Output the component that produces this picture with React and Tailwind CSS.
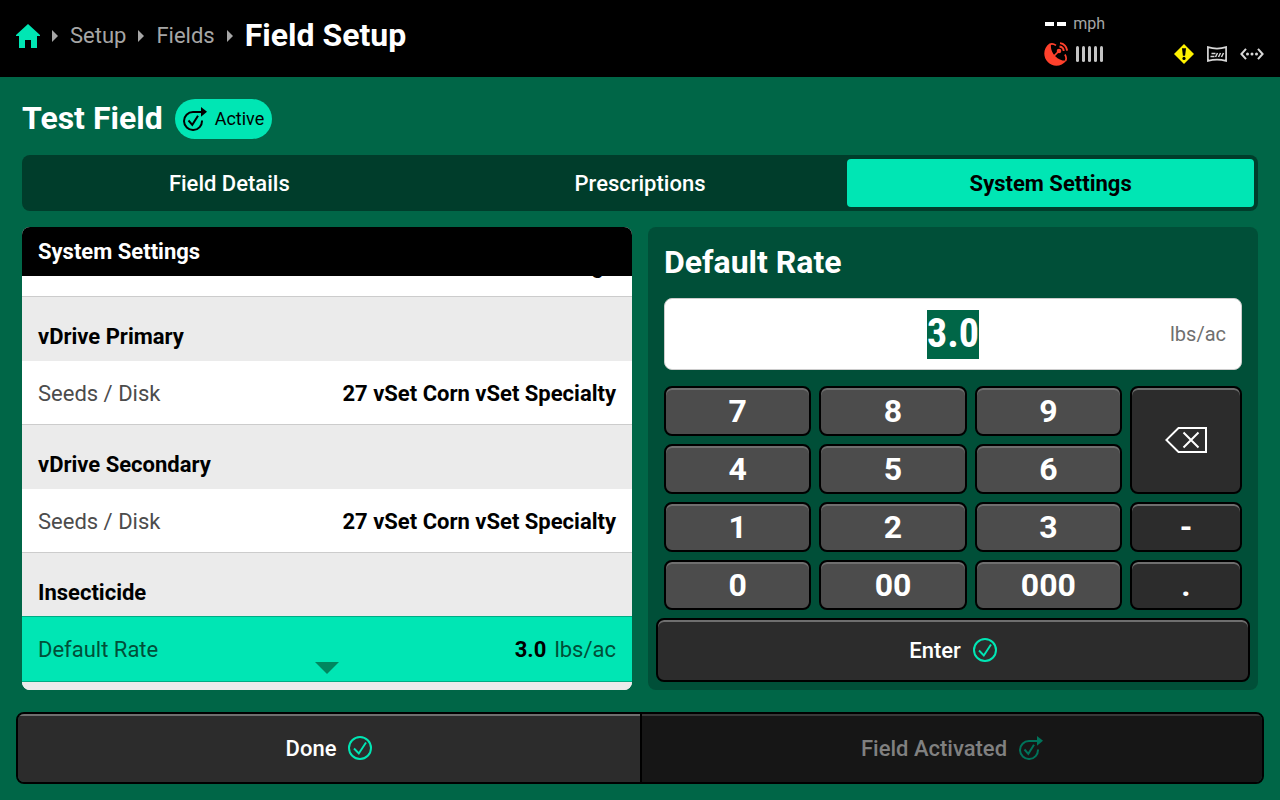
import { useEffect, useRef, useState } from 'react'
import clsx from 'clsx'

const keys = ['7', '8', '9', 'back', '4', '5', '6', '1', '2', '3', '-', '0', '00', '000', '.']

const tabs = ['Field Details', 'Prescriptions', 'System Settings']

const sections = [
  { title: 'Control', rows: [{ label: 'Mode', value: 'Average' }] },
  { title: 'vDrive Primary', rows: [{ label: 'Seeds / Disk', value: '27 vSet Corn vSet Specialty' }] },
  { title: 'vDrive Secondary', rows: [{ label: 'Seeds / Disk', value: '27 vSet Corn vSet Specialty' }] },
  { title: 'Insecticide', rows: [{ label: 'Default Rate', value: '3.0', unit: 'lbs/ac', selected: true }] },
  { title: 'Liquid', rows: [{ label: 'Default Rate', value: '5.0', unit: 'gal/ac' }] },
]

function HomeIcon() {
  return (
    <svg viewBox="0 0 24 24" className="w-6 h-6" fill="#00e6b4">
      <path d="M12 0 24 11v1h-3v12h-6v-8H9v8H3V12H0v-1z" />
    </svg>
  )
}

function Crumb({ children }) {
  return (
    <>
      <svg viewBox="0 0 6 12" className="w-[6px] h-3" fill="#a6a6a6">
        <path d="M0 0l6 6-6 6z" />
      </svg>
      {children}
    </>
  )
}

function DishIcon() {
  return (
    <svg viewBox="0 0 24 24" className="w-6 h-6" fill="none" stroke="#ff412c">
      <path
        d="M5.500 1.500C-.8 6-1.500 15 4 20.300c5 5 13.500 4.600 18.500-1.800-3.500 .6-8-1-11.200-4.300C8 10.800 6.500 6.500 7 3.500z"
        fill="#ff412c"
        stroke="none"
      />
      <path d="M5.500 2.600c1.500-1 4.200-.9 6.500.8M21.500 18.800c.9-1.600.7-4.200-.6-6.300" strokeWidth="1.700" />
      <path d="M9.500 14.500l5-5" strokeWidth="1.700" />
      <circle cx="15" cy="9" r="2.300" fill="#ff412c" stroke="none" />
      <path d="M15.500 4.500a4.800 4.800 0 0 1 4.200 4.500M16 1.100a8 8 0 0 1 7.100 7.500" strokeWidth="1.900" />
    </svg>
  )
}

function SignalBars() {
  return (
    <div className="flex gap-[3px]">
      {[0, 1, 2, 3, 4].map((i) => (
        <span key={i} className="w-[3px] h-4 rounded-sm bg-[#c4c4c4]" />
      ))}
    </div>
  )
}

function WarningIcon() {
  return (
    <svg viewBox="0 0 20 20" className="w-5 h-5">
      <path d="M10 0l10 10-10 10L0 10z" fill="#fff200" />
      <path d="M8 4.200h4l-.9 7.600H8.900z" fill="#000" />
      <circle cx="10" cy="14.400" r="1.600" fill="#000" />
    </svg>
  )
}

function MonitorIcon() {
  return (
    <svg viewBox="0 0 20 16" className="w-5 h-4" fill="none" stroke="#d8d8d8">
      <path d="M.9 1.100Q10 4 19.100 1.100v13.800Q10 12.500.9 14.900z" strokeWidth="1.700" />
      <path d="M4.500 7.500h4M3.500 10.500h4M8.500 11l2-4M11.500 11l2-4M14.500 11l2-4" strokeWidth="1.500" />
    </svg>
  )
}

function NetworkIcon() {
  return (
    <svg viewBox="0 0 24 12" className="w-6 h-3" fill="none" stroke="#d8d8d8" strokeWidth="2">
      <path d="M6 .8L1.400 6 6 11.200M18 .8L22.600 6 18 11.200" />
      <g fill="#d8d8d8" stroke="none">
        <circle cx="7.500" cy="6" r="1.500" />
        <circle cx="12" cy="6" r="1.500" />
        <circle cx="16.500" cy="6" r="1.500" />
      </g>
    </svg>
  )
}

function CheckIcon() {
  return (
    <svg viewBox="0 0 24 24" className="w-6 h-6" fill="none" stroke="#00e6b4">
      <circle cx="12" cy="12" r="11" strokeWidth="2" />
      <path d="M6 12.500l4.800 5L18 6.500" strokeWidth="1.900" />
    </svg>
  )
}

function ActivatedIcon() {
  return (
    <svg viewBox="0 0 24 24" className="w-6 h-6" fill="none" stroke="currentColor">
      <path d="M18 5H10a9 9 0 1 0 9 8.500" strokeWidth="2" />
      <path d="M18 0l6 4.800-6 5z" fill="currentColor" stroke="none" />
      <path d="M5.500 13.500l3.800 4.300 5.700-9" strokeWidth="2" />
    </svg>
  )
}

function BackspaceIcon() {
  return (
    <svg viewBox="0 0 42 26" className="w-[42px] h-[26px]" fill="none" stroke="#fff" strokeWidth="2">
      <path d="M13.500 1H41v24H13.500L1.300 13z" />
      <path d="M18.500 5.500l15 15M33.500 5.500l-15 15" />
    </svg>
  )
}

function Header() {
  return (
    <header className="flex justify-between h-[77px] shrink-0 bg-black px-4">
      <nav className="flex items-center gap-3 h-[72px] text-[22px] text-[#a6a6a6]">
        <a href="#home" aria-label="Home"><HomeIcon /></a>
        <Crumb><a href="#setup" className="pb-0.5">Setup</a></Crumb>
        <Crumb><a href="#fields" className="pb-0.5">Fields</a></Crumb>
        <Crumb><h1 className="pb-0.5 text-[32px] font-bold text-white">Field Setup</h1></Crumb>
      </nav>
      <div className="flex gap-[69px]">
        <div className="flex flex-col pt-3">
          <div className="flex items-center gap-[7px] h-6 pl-px">
            <span className="flex gap-[3px]">
              <span className="w-[9px] h-1 bg-white" />
              <span className="w-[9px] h-1 bg-white" />
            </span>
            <span className="text-base text-[#a6a6a6]">mph</span>
          </div>
          <div className="flex items-center gap-2 pt-[6px]">
            <DishIcon />
            <SignalBars />
          </div>
        </div>
        <div className="flex items-center gap-[13px] pt-[31px]">
          <WarningIcon />
          <MonitorIcon />
          <NetworkIcon />
        </div>
      </div>
    </header>
  )
}

function SettingRow({ label, value, unit, selected }) {
  return (
    <button
      type="button"
      className={clsx(
        'flex items-center justify-between w-full px-4 text-[22px]',
        selected
          ? 'relative h-[66px] -mt-px bg-[#00e6b4] border-y border-[#00ac84] text-[#004f38]'
          : 'h-16 pt-0.5 bg-white border-b border-[#cccccc] text-[#4c4c4c]'
      )}
    >
      <span>{label}</span>
      <span className="flex gap-2">
        <span className="font-bold text-black">{value}</span>
        {unit && <span>{unit}</span>}
      </span>
    </button>
  )
}

function SettingsList() {
  const listRef = useRef(null)

  useEffect(() => {
    listRef.current.scrollTop = 107
  }, [])

  return (
    <section className="relative flex flex-col min-w-0 min-h-0 rounded-lg overflow-hidden bg-white">
      <h3 className="shrink-0 h-[49px] leading-[49px] px-4 bg-black text-[22px] font-bold text-white">
        System Settings
      </h3>
      <div ref={listRef} className="flex-1 min-h-0 overflow-y-auto [scrollbar-width:none]">
        {sections.map((section) => (
          <div key={section.title}>
            <h4 className="h-16 px-4 pt-6 bg-[#ebebeb] text-[22px] leading-8 font-bold text-black">
              {section.title}
            </h4>
            {section.rows.map((row) => (
              <SettingRow key={row.label} {...row} />
            ))}
          </div>
        ))}
      </div>
      {/* more rows below */}
      <svg viewBox="0 0 24 12" className="absolute bottom-4 left-1/2 -translate-x-1/2 w-6 h-3" fill="#00875f">
        <path d="M0 0h24L12 12z" />
      </svg>
    </section>
  )
}

function Keypad({ value, onChange }) {
  const press = (key) => {
    if (key === 'back') onChange(value.slice(0, -1))
    else onChange(value + key)
  }

  return (
    <div className="grid grid-cols-[1fr_1fr_1fr_112px] grid-rows-4 gap-2 flex-1 px-2 pt-4 pb-2">
      {keys.map((key) => (
        <button
          key={key}
          type="button"
          aria-label={key === 'back' ? 'Backspace' : undefined}
          onClick={() => press(key)}
          className={clsx(
            'flex items-center justify-center rounded-lg border-2 border-black text-[32px] leading-none font-bold text-white shadow-[inset_0_2px_0_#6f6f6f]',
            ['back', '-', '.'].includes(key) ? 'bg-[#2c2c2c]' : 'bg-[#4c4c4c]',
            key === 'back' && 'row-span-2'
          )}
        >
          {key === 'back' ? <BackspaceIcon /> : key}
        </button>
      ))}
    </div>
  )
}

function RateEditor() {
  const [rate, setRate] = useState('3.0')

  return (
    <section className="flex flex-col min-w-0 rounded-lg bg-[#004f38] px-2 pb-2">
      <label htmlFor="rate" className="h-[71px] leading-[71px] px-2 text-[32px] font-bold text-white">
        Default Rate
      </label>
      <div className="grid grid-cols-[1fr_auto_1fr] items-center h-[72px] mx-2 px-[15px] rounded-lg bg-white border border-[#cccccc]">
        <input
          id="rate"
          value={rate}
          onChange={(e) => setRate(e.target.value)}
          className="col-start-2 field-sizing-content h-[49px] bg-[#006647] text-center text-[40px] font-bold text-white outline-none font-['Roboto_Condensed','Roboto',sans-serif]"
        />
        <span className="justify-self-end text-xl text-[#6f6f6f]">lbs/ac</span>
      </div>
      <Keypad value={rate} onChange={setRate} />
      <button
        type="button"
        className="flex items-center justify-center gap-3 h-16 rounded-lg border-2 border-black bg-[#2c2c2c] text-[22px] font-medium text-white shadow-[inset_0_2px_0_#6f6f6f]"
      >
        Enter <CheckIcon />
      </button>
    </section>
  )
}

export default function App() {
  const [activeTab, setActiveTab] = useState('System Settings')

  return (
    <div className="flex flex-col h-screen min-h-[720px] bg-[#006647] font-['Roboto',sans-serif]">
      <Header />
      <main className="flex flex-col flex-1 min-h-0 px-4 pb-4">
        <div className="flex flex-col flex-1 min-h-0 gap-4 px-[6px] pt-[22px]">
          <div className="flex items-center h-10 gap-3">
            <h2 className="pb-0.5 text-[32px] leading-10 font-bold text-white">Test Field</h2>
            <span className="flex items-center gap-2 h-10 px-2 rounded-full bg-[#00e6b4] text-lg text-black">
              <ActivatedIcon /> Active
            </span>
          </div>

          <div role="tablist" className="grid grid-cols-3 gap-1 shrink-0 h-14 p-1 rounded-lg bg-[#003d2b]">
            {tabs.map((tab) => (
              <button
                key={tab}
                type="button"
                role="tab"
                aria-selected={tab === activeTab}
                onClick={() => setActiveTab(tab)}
                className={clsx(
                  'rounded text-[22px]',
                  tab === activeTab ? 'bg-[#00e6b4] font-bold text-black' : 'font-medium text-white'
                )}
              >
                {tab}
              </button>
            ))}
          </div>

          <div className="grid grid-cols-2 grid-rows-1 flex-1 min-h-0 gap-4">
            <SettingsList />
            <RateEditor />
          </div>
        </div>

        <footer className="grid grid-cols-2 shrink-0 h-[72px] mt-[22px] rounded-lg border-2 border-black overflow-hidden">
          <button
            type="button"
            className="flex items-center justify-center gap-3 bg-[#2c2c2c] text-[22px] font-medium text-white shadow-[inset_0_2px_0_#6f6f6f]"
          >
            Done <CheckIcon />
          </button>
          <button
            type="button"
            disabled
            className="flex items-center justify-center gap-3 border-l-2 border-black bg-[#161616] text-[22px] font-medium text-[#808080] shadow-[inset_0_2px_0_#383838]"
          >
            Field Activated
            <span className="text-[#00735a]"><ActivatedIcon /></span>
          </button>
        </footer>
      </main>
    </div>
  )
}
